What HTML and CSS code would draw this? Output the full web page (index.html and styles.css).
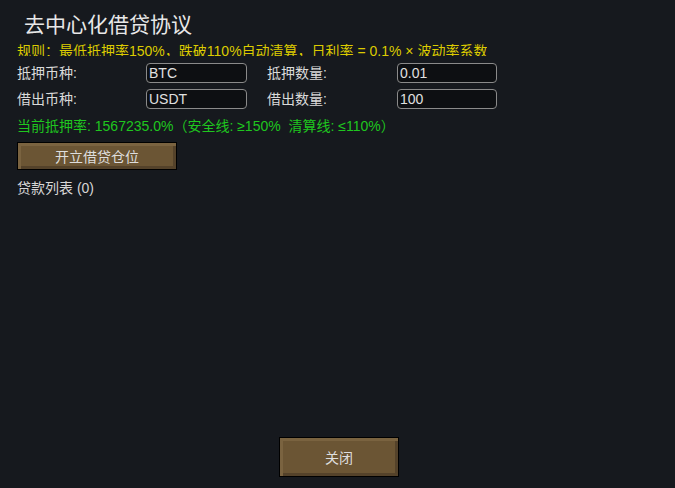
FILE: index.html
```html
<!DOCTYPE html>
<html lang="zh">
<head>
<meta charset="utf-8">
<link rel="stylesheet" href="styles.css">
</head>
<body>
<div class="dialog">
  <h1 class="title">去中心化借贷协议</h1>
  <div class="rule"><span>规则：最低抵押率150%，跌破110%自动清算，日利率 = 0.1% × 波动率系数</span></div>
  <div class="form">
    <div class="label">抵押币种:</div>
    <div class="input">BTC</div>
    <div class="label label-right">抵押数量:</div>
    <div class="input">0.01</div>
    <div class="label">借出币种:</div>
    <div class="input">USDT</div>
    <div class="label label-right">借出数量:</div>
    <div class="input">100</div>
  </div>
  <div class="ratio">当前抵押率: 1567235.0%（安全线: ≥150%&nbsp;&nbsp;清算线: ≤110%）</div>
  <button class="btn btn-open">开立借贷仓位</button>
  <div class="loans">贷款列表 (0)</div>
  <div class="footer">
    <button class="btn btn-close">关闭</button>
  </div>
</div>
</body>
</html>
```
FILE: styles.css
```css
html, body {
  margin: 0;
  padding: 0;
  background: #16191e;
}
body {
  font-family: "Liberation Sans", "Noto Sans CJK SC", sans-serif;
  color: #dcdcdc;
}
.dialog {
  height: 488px;
  box-sizing: border-box;
  padding: 12px 0 11px 17px;
  display: flex;
  flex-direction: column;
  align-items: flex-start;
}
.title {
  margin: 0 0 0 7px;
  font-weight: normal;
  font-size: 21px;
  line-height: 26px;
  height: 26px;
  color: #e8e8e8;
}
.rule {
  margin-top: 6px;
  height: 12px;
  overflow: hidden;
  font-size: 14px;
  line-height: 15px;
  color: #dccb00;
  white-space: nowrap;
}
.form {
  margin-top: 7px;
  display: grid;
  grid-template-columns: 129px 101px 150px 100px;
  grid-auto-rows: 20px;
  row-gap: 6px;
  align-items: center;
}
.label {
  font-size: 14px;
  line-height: 20px;
  color: #dadada;
}
.label-right {
  padding-left: 20px;
}
.input {
  box-sizing: border-box;
  height: 20px;
  border: 1px solid #8a8a8a;
  border-radius: 4px;
  background: #0d0f12;
  font-size: 14px;
  line-height: 18px;
  padding-left: 2px;
  color: #e0e0e0;
}
.ratio {
  margin-top: 8px;
  font-size: 14px;
  line-height: 18px;
  color: #1fc61f;
  white-space: nowrap;
}
.btn {
  font-family: "Liberation Sans", "Noto Sans CJK SC", sans-serif;
  font-size: 14px;
  color: #dedede;
  background: #6b5534;
  border: 1px solid #000;
  padding: 0;
  box-shadow:
    inset 3px 3px 0 #7a6340,
    inset -3px -3px 0 #54422a;
  cursor: pointer;
}
.btn-open {
  margin-top: 7px;
  width: 160px;
  height: 28px;
}
.loans {
  margin-top: 9px;
  font-size: 14px;
  line-height: 18px;
  color: #d6d6d6;
}
.footer {
  margin-top: auto;
  align-self: stretch;
  display: flex;
  justify-content: center;
}
.btn-close {
  margin-left: -14px;
  width: 120px;
  height: 40px;
}
```
